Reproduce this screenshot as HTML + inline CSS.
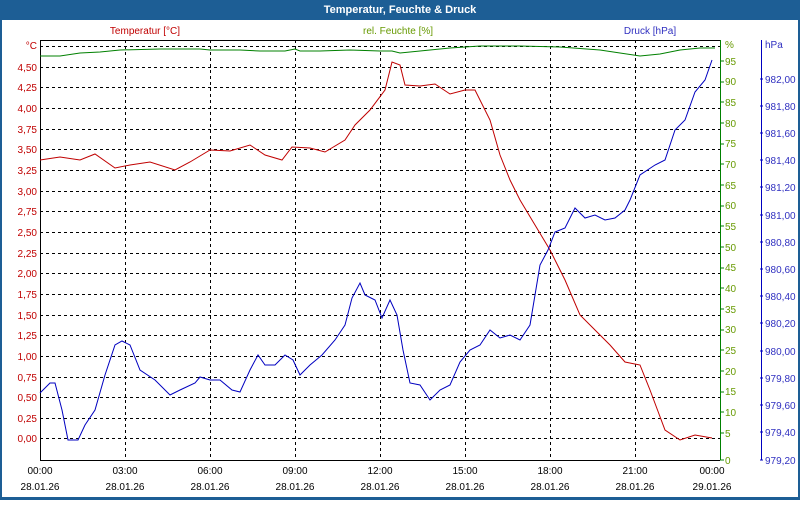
<!DOCTYPE html><html><head><style>body{margin:0;width:800px;height:500px;overflow:hidden;background:#fff}</style></head><body>
<svg width="800" height="500" xmlns="http://www.w3.org/2000/svg" font-family="Liberation Sans, sans-serif" font-size="10">
<rect x="0" y="0" width="800" height="500" fill="#1d5e95"/>
<rect x="2" y="20" width="796" height="477" fill="#fff"/>
<text x="400" y="13" text-anchor="middle" fill="#fff" font-weight="bold" font-size="11">Temperatur, Feuchte &amp; Druck</text>
<text x="145" y="34" text-anchor="middle" fill="#c00000">Temperatur [°C]</text>
<text x="398" y="34" text-anchor="middle" fill="#669900">rel. Feuchte [%]</text>
<text x="650" y="34" text-anchor="middle" fill="#3030c0">Druck [hPa]</text>
<g stroke="#000" stroke-dasharray="3,3" stroke-width="1">
<path d="M40 46.5H720M40 67.5H720M40 87.5H720M40 108.5H720M40 129.5H720M40 149.5H720M40 170.5H720M40 191.5H720M40 211.5H720M40 232.5H720M40 253.5H720M40 273.5H720M40 294.5H720M40 315.5H720M40 335.5H720M40 356.5H720M40 377.5H720M40 397.5H720M40 418.5H720M40 438.5H720"/>
<path d="M125.5 40V460M210.5 40V460M295.5 40V460M380.5 40V460M465.5 40V460M550.5 40V460M635.5 40V460"/>
</g>
<path d="M40.5 40V460.5H720M40 40.5H720" stroke="#000" fill="none"/>
<path d="M720.5 40V460" stroke="#008000"/>
<path d="M761.5 40V460" stroke="#0000c0"/>
<g fill="#c00000" text-anchor="end">
<text x="37" y="49">°C</text><text x="37" y="71">4,50</text><text x="37" y="91">4,25</text><text x="37" y="112">4,00</text><text x="37" y="133">3,75</text><text x="37" y="153">3,50</text><text x="37" y="174">3,25</text><text x="37" y="195">3,00</text><text x="37" y="215">2,75</text><text x="37" y="236">2,50</text><text x="37" y="257">2,25</text><text x="37" y="277">2,00</text><text x="37" y="298">1,75</text><text x="37" y="319">1,50</text><text x="37" y="339">1,25</text><text x="37" y="360">1,00</text><text x="37" y="381">0,75</text><text x="37" y="401">0,50</text><text x="37" y="422">0,25</text><text x="37" y="442">0,00</text>
</g>
<g fill="#669900">
<text x="725" y="48">%</text><text x="725" y="65">95</text><text x="725" y="85">90</text><text x="725" y="106">85</text><text x="725" y="127">80</text><text x="725" y="147">75</text><text x="725" y="168">70</text><text x="725" y="189">65</text><text x="725" y="209">60</text><text x="725" y="230">55</text><text x="725" y="251">50</text><text x="725" y="271">45</text><text x="725" y="292">40</text><text x="725" y="313">35</text><text x="725" y="333">30</text><text x="725" y="354">25</text><text x="725" y="375">20</text><text x="725" y="395">15</text><text x="725" y="416">10</text><text x="725" y="437">5</text><text x="725" y="464">0</text>
</g>
<g stroke="#008000"><path d="M720 61h4M720 82h4M720 102h4M720 123h4M720 144h4M720 164h4M720 185h4M720 206h4M720 226h4M720 247h4M720 268h4M720 288h4M720 309h4M720 330h4M720 350h4M720 371h4M720 392h4M720 412h4M720 433h4M720 460h4"/></g>
<g fill="#3030c0">
<text x="765" y="48">hPa</text><text x="765" y="83">982,00</text><text x="765" y="110">981,80</text><text x="765" y="137">981,60</text><text x="765" y="164">981,40</text><text x="765" y="191">981,20</text><text x="765" y="219">981,00</text><text x="765" y="246">980,80</text><text x="765" y="273">980,60</text><text x="765" y="300">980,40</text><text x="765" y="327">980,20</text><text x="765" y="355">980,00</text><text x="765" y="382">979,80</text><text x="765" y="409">979,60</text><text x="765" y="436">979,40</text><text x="765" y="464">979,20</text>
</g>
<g stroke="#0000c0"><path d="M760 79h3M760 106h3M760 133h3M760 160h3M760 187h3M760 215h3M760 242h3M760 269h3M760 296h3M760 323h3M760 351h3M760 378h3M760 405h3M760 432h3M760 460h3"/></g>
<g fill="#000" text-anchor="middle">
<text x="40" y="474">00:00</text><text x="125" y="474">03:00</text><text x="210" y="474">06:00</text><text x="295" y="474">09:00</text><text x="380" y="474">12:00</text><text x="465" y="474">15:00</text><text x="550" y="474">18:00</text><text x="635" y="474">21:00</text><text x="712" y="474">00:00</text>
<text x="40" y="490">28.01.26</text><text x="125" y="490">28.01.26</text><text x="210" y="490">28.01.26</text><text x="295" y="490">28.01.26</text><text x="380" y="490">28.01.26</text><text x="465" y="490">28.01.26</text><text x="550" y="490">28.01.26</text><text x="635" y="490">28.01.26</text><text x="712" y="490">29.01.26</text>
</g>
<polyline fill="none" stroke="#008000" points="40,56 60,56 80,53 100,52 120,50 160,49 180,49 200,49 210,50 240,50 260,51 285,51 295,49 300,51 320,51 350,50 380,51 392,51 400,53 420,51 450,48 480,46 520,46 560,47 600,50 620,53 640,56 660,54 680,50 700,48 715,48"/>
<polyline fill="none" stroke="#c00000" points="40,160 60,157 80,160 95,154 115,168 130,165 150,162 175,170 190,162 210,150 230,151 250,145 265,155 282,160 292,147 310,148 325,152 345,140 355,125 370,110 385,90 392,62 400,65 405,85 420,86 435,84 450,94 465,90 475,90 490,120 500,155 510,180 520,200 535,225 550,250 565,280 580,315 595,330 610,345 625,362 640,365 650,390 665,430 680,440 695,435 712,438"/>
<polyline fill="none" stroke="#0000c0" points="40,393 50,383 55,383 62,410 68,440 78,440 85,425 95,410 105,375 115,345 122,341 130,345 140,370 155,380 170,395 180,390 195,383 200,377 210,380 220,380 232,390 240,392 250,370 258,355 265,365 275,365 285,355 293,360 300,375 310,365 322,355 335,340 345,325 352,298 360,283 365,295 375,300 382,318 390,300 397,315 403,350 410,383 420,385 430,400 440,390 450,385 460,362 470,350 480,345 490,330 500,338 510,335 520,340 530,325 540,265 548,250 555,232 565,228 575,208 585,218 595,215 605,220 615,218 625,210 630,200 640,175 655,165 665,160 675,130 685,120 695,92 705,80 712,60"/>
</svg>
</body></html>
